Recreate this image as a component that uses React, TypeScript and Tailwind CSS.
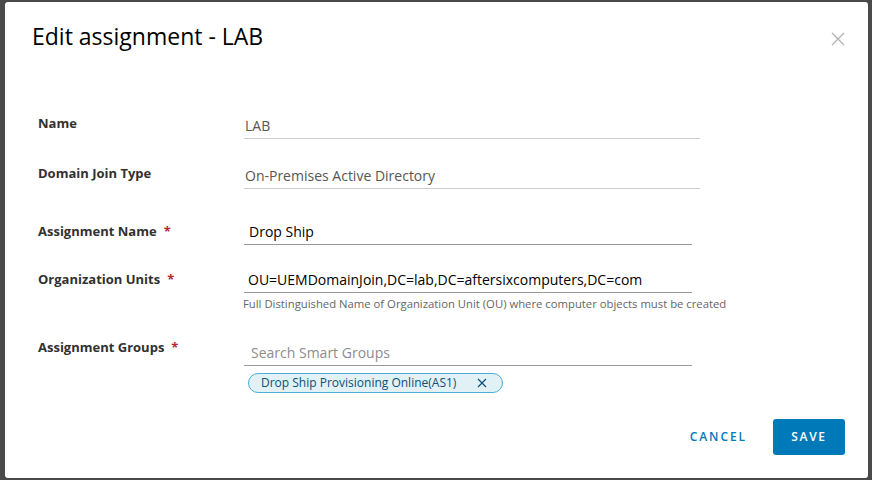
import React from "react";

const font = { fontFamily: '"Open Sans", "Noto Sans", sans-serif' };

function Label({ text, required, pt }: { text: string; required?: boolean; pt: string }) {
  return (
    <div className={`w-[206px] shrink-0 text-[13px] font-bold text-[#313131] ${pt}`}>
      {text}
      {required && <span className="ml-[7px] text-[#b8282e]">*</span>}
    </div>
  );
}

export default function App() {
  return (
    <div className="w-[872px] h-[480px] bg-[#4a4a4a] pt-[2px] pl-[5px] overflow-hidden" style={font}>
      <div className="w-[863px] h-[476px] bg-white rounded-[3px] flex flex-col">
        {/* Header */}
        <div className="flex items-start justify-between pl-[27px] pr-[22px] pt-[19px]">
          <h1 className="text-[23px] leading-[30px] text-[#000] font-normal">Edit assignment - LAB</h1>
          <button className="mt-[10px] text-[#b5b5b5]" aria-label="close">
            <svg width="16" height="16" viewBox="0 0 16 16" fill="none" stroke="currentColor" strokeWidth="1.4">
              <path d="M2 2 L14 14 M14 2 L2 14" />
            </svg>
          </button>
        </div>

        {/* Form */}
        <div className="flex flex-col pl-[33px] mt-[63px]">
          {/* Name */}
          <div className="flex">
            <Label text="Name" pt="pt-[0px]" />
            <div className="w-[456px] h-[25px] border-b border-[#cccccc] pl-[1px] text-[14px] leading-[24px] text-[#565656]">LAB</div>
          </div>
          {/* Domain Join Type */}
          <div className="flex mt-[25px]">
            <Label text="Domain Join Type" pt="pt-[0px]" />
            <div className="w-[456px] h-[25px] border-b border-[#cccccc] pl-[1px] text-[14px] leading-[24px] text-[#565656]">On-Premises Active Directory</div>
          </div>
          {/* Assignment Name */}
          <div className="flex mt-[31px]">
            <Label text="Assignment Name" required pt="pt-[2px]" />
            <div className="w-[448px] h-[25px] border-b border-[#9a9a9a] pl-[5px] text-[14px] leading-[24px] text-[#000]">Drop Ship</div>
          </div>
          {/* Organization Units */}
          <div className="flex mt-[23px]">
            <Label text="Organization Units" required pt="pt-[2px]" />
            <div className="flex flex-col">
              <div className="w-[448px] h-[25px] border-b border-[#9a9a9a] pl-[4px] text-[14px] leading-[24px] text-[#000]">OU=UEMDomainJoin,DC=lab,DC=aftersixcomputers,DC=com</div>
              <div className="mt-[4px] -ml-[1px] text-[11.3px] leading-[14px] text-[#666666]">
                Full Distinguished Name of Organization Unit (OU) where computer objects must be created
              </div>
            </div>
          </div>
          {/* Assignment Groups */}
          <div className="flex mt-[30px]">
            <Label text="Assignment Groups" required pt="pt-[0px] -mt-[3px]" />
            <div className="flex flex-col">
              <div className="w-[448px] h-[25px] border-b border-[#9a9a9a] pl-[7px] text-[14px] leading-[24px] text-[#8c8c8c]">Search Smart Groups</div>
              <div className="mt-[3px] ml-[4px]">
                <span className="inline-flex items-center h-[20px] rounded-full border border-[#49afd9] bg-[#e1f1f6] pl-[12px] pr-[15px] text-[12px] text-[#0d4f78]">
                  Drop Ship Provisioning Online(AS1)
                  <svg className="ml-[21px]" width="10" height="10" viewBox="0 0 10 10" fill="none" stroke="#0d4f78" strokeWidth="1.2">
                    <path d="M1 1 L9 9 M9 1 L1 9" />
                  </svg>
                </span>
              </div>
            </div>
          </div>
        </div>

        {/* Footer */}
        <div className="mt-auto mb-[23px] flex items-center justify-end pr-[23px] gap-[26px]">
          <button className="text-[12px] font-semibold tracking-[0.16em] text-[#0079b8]">CANCEL</button>
          <button className="w-[72px] h-[36px] rounded-[3px] bg-[#0079b8] text-[12px] font-semibold tracking-[0.14em] text-white">SAVE</button>
        </div>
      </div>
    </div>
  );
}
